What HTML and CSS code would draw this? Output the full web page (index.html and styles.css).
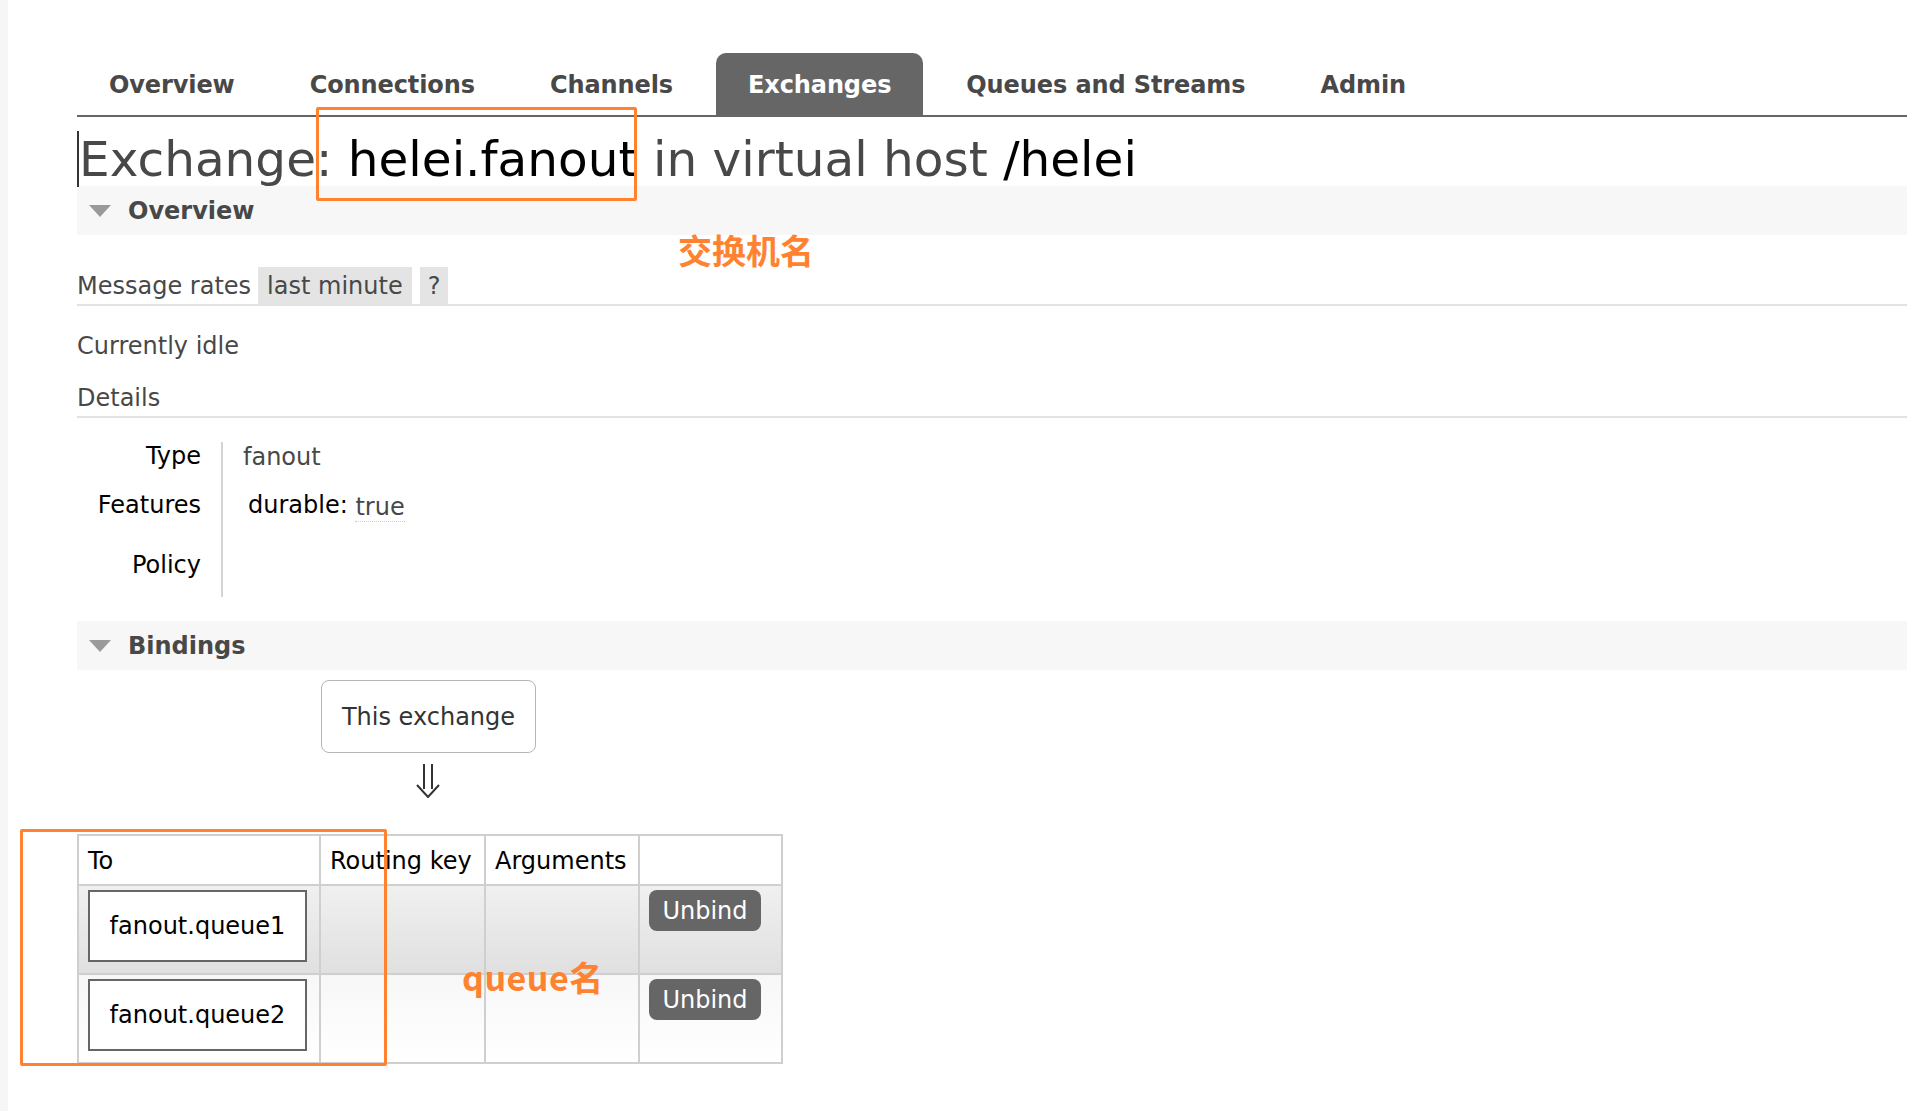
FILE: index.html
```html
<!DOCTYPE html>
<html lang="en">
<head>
<meta charset="utf-8">
<title>RabbitMQ Management - Exchange helei.fanout</title>
<link rel="stylesheet" href="styles.css">
</head>
<body>
<div class="page">
  <ul class="tabs">
    <li class="tab">Overview</li>
    <li class="tab">Connections</li>
    <li class="tab">Channels</li>
    <li class="tab active">Exchanges</li>
    <li class="tab">Queues and Streams</li>
    <li class="tab">Admin</li>
  </ul>

  <h1 class="title"><span class="caret">Exchange: <b class="hl">helei.fanout</b> in virtual host <b class="hl">/helei</b></span></h1>

  <div class="section-head"><span class="tri"></span><span>Overview</span></div>

  <div class="rates">
    <span class="rates-label">Message rates</span>
    <span class="pill">last minute</span>
    <span class="pill qm">?</span>
  </div>
  <p class="idle">Currently idle</p>
  <h3 class="details">Details</h3>

  <table class="facts">
    <tr class="r1"><th>Type</th><td>fanout</td></tr>
    <tr class="r2"><th>Features</th><td><span class="feat">durable: <abbr class="val">true</abbr></span></td></tr>
    <tr class="r3"><th>Policy</th><td></td></tr>
  </table>

  <div class="section-head bind-head"><span class="tri"></span><span>Bindings</span></div>

  <div class="this-ex">This exchange</div>
  <div class="arrow">
    <svg width="26" height="34" viewBox="0 0 26 34"><path d="M9 0 V25 M17 0 V25 M2 21 L13 33 L24 21" fill="none" stroke="#333" stroke-width="2"/></svg>
  </div>

  <table class="binds">
    <colgroup><col class="c1"><col class="c2"><col class="c3"><col class="c4"></colgroup>
    <tr class="head"><th>To</th><th>Routing key</th><th>Arguments</th><th></th></tr>
    <tr class="alt1"><td><span class="qbox">fanout.queue1</span></td><td></td><td></td><td><span class="btn">Unbind</span></td></tr>
    <tr class="alt2"><td><span class="qbox">fanout.queue2</span></td><td></td><td></td><td><span class="btn">Unbind</span></td></tr>
  </table>

  <div class="mark mark-name"></div>
  <div class="mark mark-queue"></div>
  <div class="note note-name">交换机名</div>
  <div class="note note-queue">queue名</div>
</div>
</body>
</html>
```
FILE: styles.css
```css
html, body { margin: 0; padding: 0; background: #fff; }
body { font-family: "DejaVu Sans", Verdana, sans-serif; font-size: 24px; color: #484848; }
.page {
  position: relative;
  min-height: 1111px;
  border-left: 8px solid #f6f6f6;
  padding-left: 69px;
  overflow: hidden;
}
.tabs {
  list-style: none;
  margin: 53px 0 0 0;
  padding: 0;
  display: flex;
  gap: 11px;
  border-bottom: 2px solid #666;
}
.tab {
  font-weight: bold;
  font-size: 24px;
  line-height: 60px;
  padding: 2px 32px 0;
  color: #484848;
  border-radius: 10px 10px 0 0;
  letter-spacing: -0.1px;
}
.tab.active { background: #666; color: #fff; }

.title {
  margin: 15px 0 0;
  font-size: 48.5px;
  line-height: 54px;
  font-weight: normal;
  color: #484848;
  white-space: nowrap;
}
.caret { border-left: 2px solid #333; }
.hl { font-weight: normal; color: #000; }

.section-head {
  height: 49px;
  background: #f7f7f7;
  display: flex;
  align-items: center;
  padding-left: 12px;
  font-weight: bold;
  font-size: 24px;
  color: #484848;
}
.tri {
  width: 0; height: 0;
  border-left: 11px solid transparent;
  border-right: 11px solid transparent;
  border-top: 12px solid #9a9a9a;
  margin-right: 17px;
}

.rates {
  margin-top: 32px;
  display: flex;
  align-items: flex-end;
  border-bottom: 2px solid #e2e2e2;
}
.rates-label { line-height: 35px; padding-top: 2px; margin-right: 7px; }
.pill { background: #e4e4e4; line-height: 35px; padding: 2px 9px 0; }
.pill.qm { margin-left: 8px; padding: 2px 8px 0; }

.idle { margin: 25px 0 0; line-height: 30px; }
.details {
  margin: 22px 0 0;
  font-weight: normal;
  font-size: 24px;
  line-height: 30px;
  padding-bottom: 3px;
  border-bottom: 2px solid #e2e2e2;
}

.facts { margin-top: 24px; border-collapse: collapse; }
.facts th, .facts td { vertical-align: top; line-height: 24px; }
.facts th { font-weight: normal; color: #000; text-align: right; width: 124px; padding: 2px 20px 0 0; }
.facts td { border-left: 2px solid #d4d4d4; padding: 3px 0 0 20px; }
.facts .r1 th, .facts .r1 td { height: 47px; }
.facts .r2 th { height: 60px; padding-top: 1px; }
.facts .r2 td { height: 60px; padding-top: 1px; }
.facts .r3 th, .facts .r3 td { height: 44px; padding-top: 0; }
.feat { color: #000; padding-left: 5px; }
.val { color: #484848; text-decoration: none; border-bottom: 1px dotted #ccc; position: relative; top: 2px; }

.bind-head { margin-top: 24px; }

.this-ex {
  margin: 10px 0 0 244px;
  width: 215px;
  box-sizing: border-box;
  height: 73px;
  line-height: 72px;
  border: 1px solid #b5b5b5;
  border-radius: 8px;
  color: #333;
  text-align: center;
  white-space: nowrap;
}
.arrow { margin: 11px 0 0 338px; height: 34px; }
.arrow svg { display: block; }

.binds {
  margin-top: 36px;
  border-collapse: collapse;
  table-layout: fixed;
  width: 704px;
  border: 2px solid #cfcfcf;
}
.binds col.c1 { width: 242px; }
.binds col.c2 { width: 165px; }
.binds col.c3 { width: 154px; }
.binds col.c4 { width: 143px; }
.binds th, .binds td { border: 2px solid #cfcfcf; }
.binds th {
  font-weight: normal;
  color: #000;
  text-align: left;
  height: 46px;
  padding: 2px 9px 0;
  white-space: nowrap;
}
.binds td { vertical-align: top; padding: 4px 9px 0; height: 83px; }
.alt1 td { background: linear-gradient(#f0f0f0, #e0e0e0); }
.alt2 td { background: linear-gradient(#f7f7f7, #ffffff); }
.qbox {
  display: block;
  width: 215px;
  height: 68px;
  line-height: 68px;
  border: 2px solid #666;
  background: #fff;
  color: #000;
  text-align: center;
}
.btn {
  display: block;
  width: 112px;
  height: 41px;
  line-height: 42px;
  background: #666;
  color: #fff;
  border-radius: 8px;
  text-align: center;
}

.mark {
  position: absolute;
  border: 3px solid #ff8230;
  border-radius: 2px;
}
.mark-name { left: 308px; top: 107px; width: 315px; height: 88px; }
.mark-queue { left: 12px; top: 829px; width: 361px; height: 231px; }
.note {
  position: absolute;
  font-family: "Noto Sans CJK SC", sans-serif;
  font-weight: bold;
  font-size: 34px;
  line-height: 40px;
  color: #ff8230;
  white-space: nowrap;
}
.note-name { left: 670px; top: 230px; }
.note-queue { left: 454px; top: 957px; letter-spacing: 0.5px; }
```
